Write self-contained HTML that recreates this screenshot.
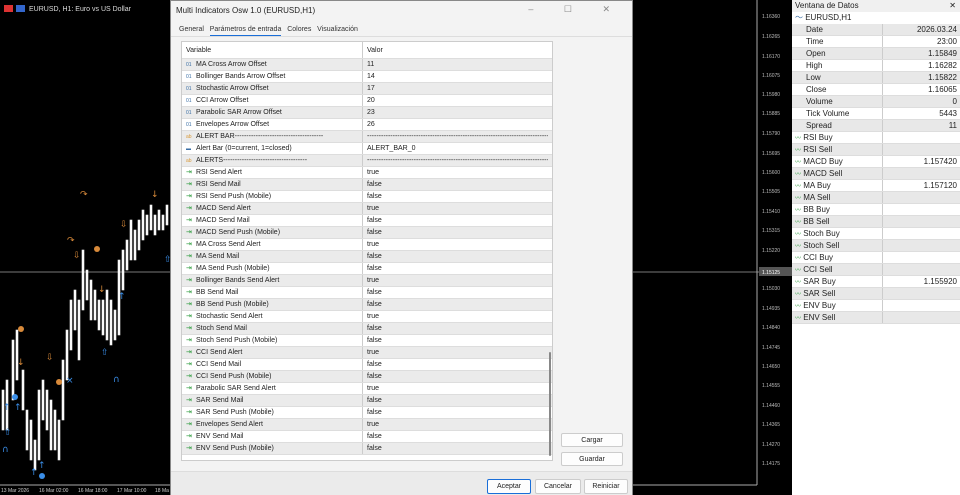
<!DOCTYPE html>
<html><head><meta charset="utf-8"><style>
*{margin:0;padding:0;box-sizing:border-box}
body{width:960px;height:495px;overflow:hidden;background:#000;font-family:"Liberation Sans",sans-serif;font-size:7px;color:#222;position:relative}
.abs{position:absolute}
#dlg{left:170px;top:0;width:463px;height:495px;background:#f3f3f3;border:1px solid #888}
#list{left:10px;top:40px;width:372px;height:420px;background:#fff;border:1px solid #ccc;overflow:hidden}
.r{height:12px;line-height:12px;display:flex;border-bottom:1px solid #ddd}
.r:nth-child(odd){background:#ebebeb}
.r .a{width:181px;padding-left:4px;border-right:1px solid #ccc;white-space:nowrap;overflow:hidden}
.r .b{padding-left:4px;white-space:nowrap;overflow:hidden;width:185px}
.i{display:inline-block;width:8px;font-size:5px;color:#3a6ea5;margin-right:2px}
.g{color:#2a9a3a;font-size:7px}
.o{color:#d89a3a}
.btn{background:#fdfdfd;border:1px solid #ccc;border-radius:2px;text-align:center;line-height:13px;font-size:7px}
#dp{left:792px;top:0;width:168px;height:495px;background:#fff}
.d{height:12px;line-height:12px;display:flex;border-bottom:1px solid #ddd;font-size:8px}
.d:nth-child(odd){background:#e8e8e8}
.d .a{width:91px;padding-left:14px;border-right:1px solid #ccc;white-space:nowrap}
.d .b{flex:1;text-align:right;padding-right:3px}
</style></head><body>
<svg class="abs" style="left:0;top:0" width="792" height="495">
<line x1="0" y1="272" x2="792" y2="272" stroke="#777" stroke-width="1"/>
<line x1="757" y1="0" x2="757" y2="485" stroke="#aaa"/>
<line x1="0" y1="485" x2="757" y2="485" stroke="#aaa"/>
<g fill="#fff" stroke="#eee" stroke-width="0.6">
<rect x="2" y="390" width="2" height="40"/><rect x="6" y="380" width="2" height="50"/><rect x="12" y="340" width="2" height="60"/><rect x="16" y="330" width="2" height="50"/><rect x="22" y="370" width="2" height="40"/><rect x="26" y="410" width="2" height="40"/><rect x="30" y="420" width="2" height="40"/><rect x="34" y="440" width="2" height="30"/><rect x="38" y="390" width="2" height="70"/><rect x="42" y="380" width="2" height="40"/><rect x="46" y="390" width="2" height="40"/><rect x="50" y="400" width="2" height="50"/><rect x="54" y="410" width="2" height="40"/><rect x="58" y="420" width="2" height="40"/><rect x="62" y="360" width="2" height="60"/><rect x="66" y="330" width="2" height="50"/><rect x="70" y="300" width="2" height="50"/><rect x="74" y="290" width="2" height="40"/><rect x="78" y="300" width="2" height="60"/><rect x="82" y="250" width="2" height="60"/><rect x="86" y="270" width="2" height="30"/><rect x="90" y="280" width="2" height="40"/><rect x="94" y="290" width="2" height="30"/><rect x="98" y="300" width="2" height="30"/><rect x="102" y="300" width="2" height="35"/><rect x="106" y="290" width="2" height="50"/><rect x="110" y="300" width="2" height="45"/><rect x="114" y="310" width="2" height="30"/><rect x="118" y="260" width="2" height="75"/><rect x="122" y="250" width="2" height="40"/><rect x="126" y="240" width="2" height="30"/><rect x="130" y="220" width="2" height="40"/><rect x="134" y="230" width="2" height="30"/><rect x="138" y="220" width="2" height="30"/><rect x="142" y="210" width="2" height="30"/><rect x="146" y="215" width="2" height="20"/><rect x="150" y="205" width="2" height="25"/><rect x="154" y="215" width="2" height="20"/><rect x="158" y="210" width="2" height="20"/><rect x="162" y="215" width="2" height="15"/><rect x="166" y="205" width="2" height="20"/>
</g>
<g fill="#d88a3a" font-size="9" font-family="DejaVu Sans">
<circle cx="21" cy="329" r="3"/><circle cx="59" cy="382" r="3"/><circle cx="97" cy="249" r="3"/>
<text x="17" y="365">↓</text><text x="46" y="360">⇩</text><text x="73" y="258">⇩</text><text x="98" y="292">↓</text><text x="151" y="197">↓</text><text x="120" y="227">⇩</text><text x="80" y="197">↷</text><text x="67" y="243">↷</text>
</g>
<g fill="#3a8ee8" font-size="9" font-family="DejaVu Sans">
<circle cx="15" cy="397" r="3"/><circle cx="42" cy="476" r="3"/>
<text x="3" y="410">↑</text><text x="14" y="410">↑</text><text x="4" y="435">⇧</text><text x="2" y="452">∩</text><text x="30" y="475">↑</text><text x="38" y="468">↑</text><text x="118" y="299">↑</text><text x="101" y="355">⇧</text><text x="113" y="382">∩</text><text x="66" y="383">×</text><text x="164" y="262">⇧</text>
</g>
<rect x="4" y="5" width="9" height="7" fill="#d33"/><rect x="16" y="5" width="9" height="7" fill="#36c"/>
<text x="29" y="11" fill="#ddd" font-size="7" font-family="Liberation Sans">EURUSD, H1:  Euro vs US Dollar</text>
<g fill="#ccc" font-size="5" font-family="Liberation Sans"><text x="1" y="492">13 Mar 2026</text><text x="39" y="492">16 Mar 02:00</text><text x="78" y="492">16 Mar 18:00</text><text x="117" y="492">17 Mar 10:00</text><text x="155" y="492">18 Ma</text></g>
<g fill="#bbb" font-size="5" font-family="Liberation Sans">
<text x="762" y="18">1.16360</text><text x="762" y="38">1.16265</text><text x="762" y="58">1.16170</text><text x="762" y="77">1.16075</text><text x="762" y="96">1.15980</text><text x="762" y="115">1.15885</text><text x="762" y="135">1.15790</text><text x="762" y="155">1.15695</text><text x="762" y="174">1.15600</text><text x="762" y="193">1.15505</text><text x="762" y="213">1.15410</text><text x="762" y="232">1.15315</text><text x="762" y="252">1.15220</text><text x="762" y="290">1.15030</text><text x="762" y="310">1.14935</text><text x="762" y="329">1.14840</text><text x="762" y="349">1.14745</text><text x="762" y="368">1.14650</text><text x="762" y="387">1.14555</text><text x="762" y="407">1.14460</text><text x="762" y="426">1.14365</text><text x="762" y="446">1.14270</text><text x="762" y="465">1.14175</text>
</g>
<rect x="759" y="267" width="33" height="9" fill="#555"/><text x="762" y="274" fill="#fff" font-size="5" font-family="Liberation Sans">1.15125</text>
</svg>

<div id="dlg" class="abs">
<div class="abs" style="left:5px;top:5px;font-size:8px;color:#222">Multi Indicators Osw 1.0 (EURUSD,H1)</div>
<div class="abs" style="right:8px;top:3px;font-size:9px;color:#888;letter-spacing:14px">– ☐ ✕</div>
<div class="abs" style="left:8px;top:25px;font-size:7px;color:#333">General&nbsp;&nbsp;&nbsp;<span style="border-bottom:2px solid #1a6ed8;padding-bottom:2px">Parámetros de entrada</span>&nbsp;&nbsp;&nbsp;Colores&nbsp;&nbsp;&nbsp;Visualización</div>
<div class="abs" style="left:0;top:35px;width:461px;height:1px;background:#ddd"></div>
<div id="list" class="abs">
<div style="height:17px;line-height:17px;display:flex;background:#fff;border-bottom:1px solid #ddd"><div style="width:181px;padding-left:4px;border-right:1px solid #ccc">Variable</div><div style="padding-left:4px">Valor</div></div>
<div>
<div class="r"><div class="a"><span class="i">01</span>MA Cross Arrow Offset</div><div class="b">11</div></div>
<div class="r"><div class="a"><span class="i">01</span>Bollinger Bands Arrow Offset</div><div class="b">14</div></div>
<div class="r"><div class="a"><span class="i">01</span>Stochastic Arrow Offset</div><div class="b">17</div></div>
<div class="r"><div class="a"><span class="i">01</span>CCI Arrow Offset</div><div class="b">20</div></div>
<div class="r"><div class="a"><span class="i">01</span>Parabolic SAR Arrow Offset</div><div class="b">23</div></div>
<div class="r"><div class="a"><span class="i">01</span>Envelopes Arrow Offset</div><div class="b">26</div></div>
<div class="r"><div class="a"><span class="i o">ab</span>ALERT BAR--------------------------------------</div><div class="b">----------------------------------------------------------------------------------</div></div>
<div class="r"><div class="a"><span class="i">▬</span>Alert Bar (0=current, 1=closed)</div><div class="b">ALERT_BAR_0</div></div>
<div class="r"><div class="a"><span class="i o">ab</span>ALERTS------------------------------------</div><div class="b">----------------------------------------------------------------------------------</div></div>
<div class="r"><div class="a"><span class="i g">⇥</span>RSI Send Alert</div><div class="b">true</div></div>
<div class="r"><div class="a"><span class="i g">⇥</span>RSI Send Mail</div><div class="b">false</div></div>
<div class="r"><div class="a"><span class="i g">⇥</span>RSI Send Push (Mobile)</div><div class="b">false</div></div>
<div class="r"><div class="a"><span class="i g">⇥</span>MACD Send Alert</div><div class="b">true</div></div>
<div class="r"><div class="a"><span class="i g">⇥</span>MACD Send Mail</div><div class="b">false</div></div>
<div class="r"><div class="a"><span class="i g">⇥</span>MACD Send Push (Mobile)</div><div class="b">false</div></div>
<div class="r"><div class="a"><span class="i g">⇥</span>MA Cross Send Alert</div><div class="b">true</div></div>
<div class="r"><div class="a"><span class="i g">⇥</span>MA Send Mail</div><div class="b">false</div></div>
<div class="r"><div class="a"><span class="i g">⇥</span>MA Send Push (Mobile)</div><div class="b">false</div></div>
<div class="r"><div class="a"><span class="i g">⇥</span>Bollinger Bands Send Alert</div><div class="b">true</div></div>
<div class="r"><div class="a"><span class="i g">⇥</span>BB Send Mail</div><div class="b">false</div></div>
<div class="r"><div class="a"><span class="i g">⇥</span>BB Send Push (Mobile)</div><div class="b">false</div></div>
<div class="r"><div class="a"><span class="i g">⇥</span>Stochastic Send Alert</div><div class="b">true</div></div>
<div class="r"><div class="a"><span class="i g">⇥</span>Stoch Send Mail</div><div class="b">false</div></div>
<div class="r"><div class="a"><span class="i g">⇥</span>Stoch Send Push (Mobile)</div><div class="b">false</div></div>
<div class="r"><div class="a"><span class="i g">⇥</span>CCI Send Alert</div><div class="b">true</div></div>
<div class="r"><div class="a"><span class="i g">⇥</span>CCI Send Mail</div><div class="b">false</div></div>
<div class="r"><div class="a"><span class="i g">⇥</span>CCI Send Push (Mobile)</div><div class="b">false</div></div>
<div class="r"><div class="a"><span class="i g">⇥</span>Parabolic SAR Send Alert</div><div class="b">true</div></div>
<div class="r"><div class="a"><span class="i g">⇥</span>SAR Send Mail</div><div class="b">false</div></div>
<div class="r"><div class="a"><span class="i g">⇥</span>SAR Send Push (Mobile)</div><div class="b">false</div></div>
<div class="r"><div class="a"><span class="i g">⇥</span>Envelopes Send Alert</div><div class="b">true</div></div>
<div class="r"><div class="a"><span class="i g">⇥</span>ENV Send Mail</div><div class="b">false</div></div>
<div class="r"><div class="a"><span class="i g">⇥</span>ENV Send Push (Mobile)</div><div class="b">false</div></div>
</div>
<div class="abs" style="left:367px;top:310px;width:2px;height:104px;background:#888;border-radius:1px"></div>
</div>
<div class="abs btn" style="left:390px;top:432px;width:62px;height:14px">Cargar</div>
<div class="abs btn" style="left:390px;top:451px;width:62px;height:14px">Guardar</div>
<div class="abs" style="left:0;top:470px;width:461px;height:24px;background:#ebebeb;border-top:1px solid #ddd"></div>
<div class="abs btn" style="left:316px;top:478px;width:44px;height:15px;border-color:#1a6ed8">Aceptar</div>
<div class="abs btn" style="left:364px;top:478px;width:46px;height:15px">Cancelar</div>
<div class="abs btn" style="left:413px;top:478px;width:44px;height:15px">Reiniciar</div>
</div>

<div id="dp" class="abs">
<div style="height:12px;line-height:12px;padding-left:3px;background:#f0f0f0;font-size:8px">Ventana de Datos<span style="float:right;padding-right:4px">✕</span></div>
<div style="height:12px;line-height:12px;padding-left:3px;font-size:8px"><span style="color:#3a6ea5">〜</span> EURUSD,H1</div>
<div>
<div class="d"><div class="a">Date</div><div class="b">2026.03.24</div></div>
<div class="d"><div class="a">Time</div><div class="b">23:00</div></div>
<div class="d"><div class="a">Open</div><div class="b">1.15849</div></div>
<div class="d"><div class="a">High</div><div class="b">1.16282</div></div>
<div class="d"><div class="a">Low</div><div class="b">1.15822</div></div>
<div class="d"><div class="a">Close</div><div class="b">1.16065</div></div>
<div class="d"><div class="a">Volume</div><div class="b">0</div></div>
<div class="d"><div class="a">Tick Volume</div><div class="b">5443</div></div>
<div class="d"><div class="a">Spread</div><div class="b">11</div></div>
<div class="d"><div class="a" style="padding-left:3px"><span class="g" style="font-size:6px">〰</span> RSI Buy</div><div class="b"></div></div>
<div class="d"><div class="a" style="padding-left:3px"><span class="g" style="font-size:6px">〰</span> RSI Sell</div><div class="b"></div></div>
<div class="d"><div class="a" style="padding-left:3px"><span class="g" style="font-size:6px">〰</span> MACD Buy</div><div class="b">1.157420</div></div>
<div class="d"><div class="a" style="padding-left:3px"><span class="g" style="font-size:6px">〰</span> MACD Sell</div><div class="b"></div></div>
<div class="d"><div class="a" style="padding-left:3px"><span class="g" style="font-size:6px">〰</span> MA Buy</div><div class="b">1.157120</div></div>
<div class="d"><div class="a" style="padding-left:3px"><span class="g" style="font-size:6px">〰</span> MA Sell</div><div class="b"></div></div>
<div class="d"><div class="a" style="padding-left:3px"><span class="g" style="font-size:6px">〰</span> BB Buy</div><div class="b"></div></div>
<div class="d"><div class="a" style="padding-left:3px"><span class="g" style="font-size:6px">〰</span> BB Sell</div><div class="b"></div></div>
<div class="d"><div class="a" style="padding-left:3px"><span class="g" style="font-size:6px">〰</span> Stoch Buy</div><div class="b"></div></div>
<div class="d"><div class="a" style="padding-left:3px"><span class="g" style="font-size:6px">〰</span> Stoch Sell</div><div class="b"></div></div>
<div class="d"><div class="a" style="padding-left:3px"><span class="g" style="font-size:6px">〰</span> CCI Buy</div><div class="b"></div></div>
<div class="d"><div class="a" style="padding-left:3px"><span class="g" style="font-size:6px">〰</span> CCI Sell</div><div class="b"></div></div>
<div class="d"><div class="a" style="padding-left:3px"><span class="g" style="font-size:6px">〰</span> SAR Buy</div><div class="b">1.155920</div></div>
<div class="d"><div class="a" style="padding-left:3px"><span class="g" style="font-size:6px">〰</span> SAR Sell</div><div class="b"></div></div>
<div class="d"><div class="a" style="padding-left:3px"><span class="g" style="font-size:6px">〰</span> ENV Buy</div><div class="b"></div></div>
<div class="d"><div class="a" style="padding-left:3px"><span class="g" style="font-size:6px">〰</span> ENV Sell</div><div class="b"></div></div>
</div>
</div>
</body></html>
